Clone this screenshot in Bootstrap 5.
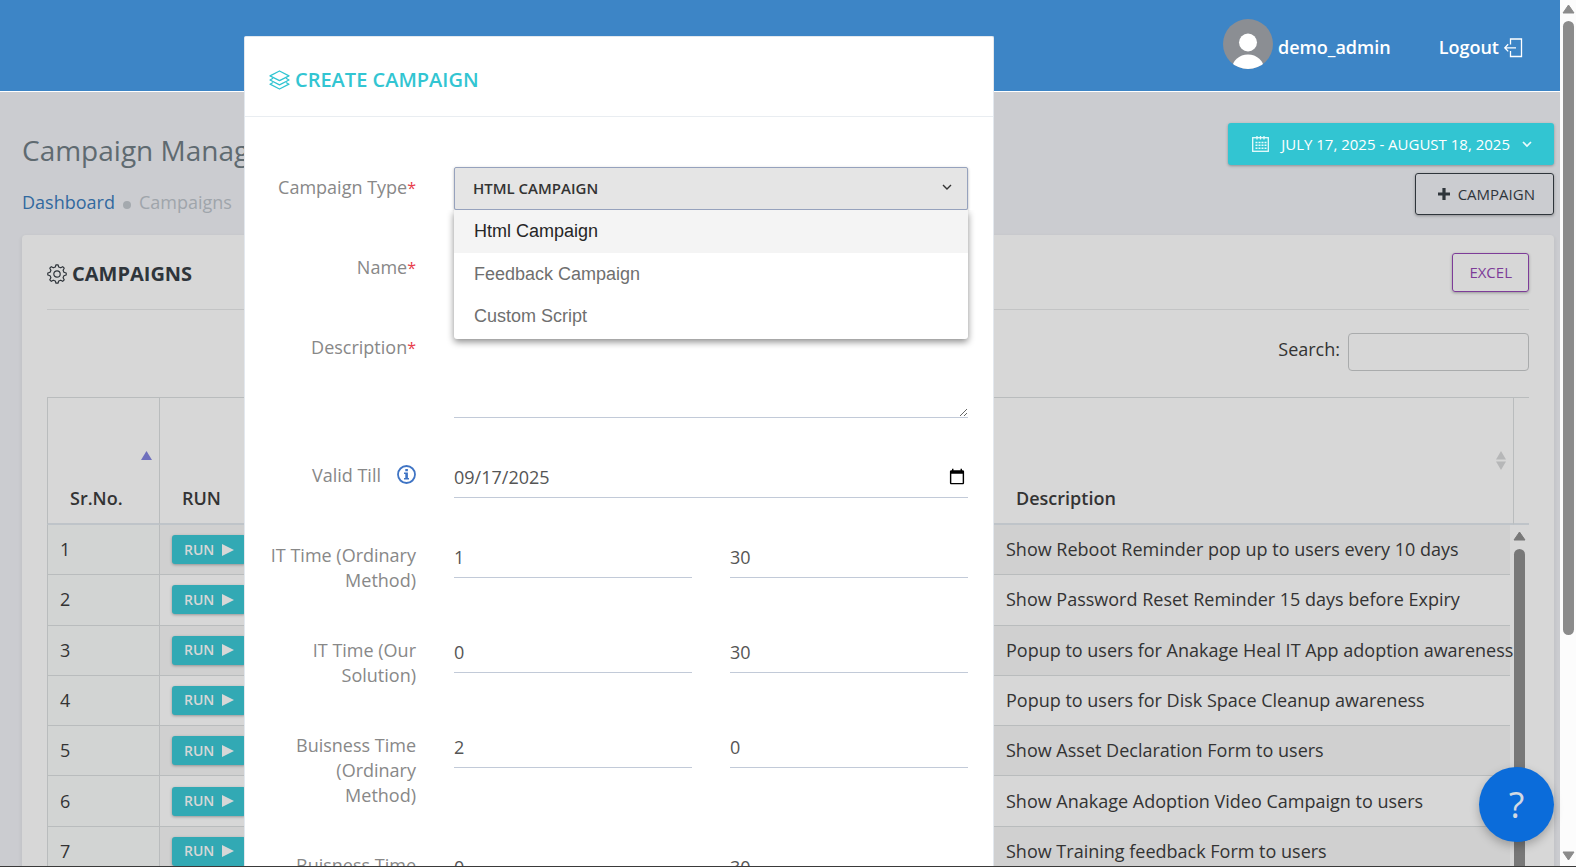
<!DOCTYPE html>
<html lang="en">
<head>
<meta charset="utf-8">
<meta name="viewport" content="width=device-width, initial-scale=1">
<title>Campaign Management</title>
<link href="https://cdn.jsdelivr.net/npm/bootstrap@5.3.0/dist/css/bootstrap.min.css" rel="stylesheet">
<style>
  body { font-family: "Open Sans", sans-serif; font-size: 18px; line-height: 25px; color: #333; background: #cbccd0; }
  svg { display: block; flex: none; }
  .shell { border-bottom: 1px solid #3a3a3a; }
  .topbar { height: 92px; background: #3d85c6; border-bottom: 1px solid #fff; padding: 4px 37px 0 22px; }
  .topbar a { color: #fff; font-weight: 600; gap: 5px; }
  .content { padding: 31px 6px 0 22px; }
  .page-title { font-size: 28px; line-height: 36px; color: #5f6a70; margin: 9px 0 22px; font-weight: 400; }
  .crumbs { color: #9fa5ab; }
  .crumbs a { color: #32699f; }
  .dot { width: 8px; height: 8px; border-radius: 50%; background: #a4a9ae; }
  .btn { --bs-btn-font-size: 15px; --bs-btn-border-radius: 3px; --bs-btn-line-height: 22px; text-transform: uppercase; font-weight: 600; box-shadow: 0 1px 3px rgba(0,0,0,.3); }
  .btn-range { --bs-btn-bg: #32c5d2; --bs-btn-color: #fff; height: 42px; padding: 0 22px 0 24px; border: 0; }
  .btn-add { --bs-btn-color: #2f353b; --bs-btn-border-color: #2f353b; height: 42px; padding: 0 18px 0 22px; }
  .btn-excel { --bs-btn-color: #7d3c98; --bs-btn-border-color: #7d3c98; height: 39px; padding: 0 16px; }
  .btn-range, .btn-add, .btn-excel { font-weight: 500; }
  .panel { background: #d7d7d7; border-radius: 4px 4px 0 0; padding: 0 25px; box-shadow: 0 2px 3px 2px rgba(0,0,0,.04); margin-top: 20px; }
  .panel-head { height: 75px; border-bottom: 1px solid #c3c4c5; }
  .panel-head h2 { font-size: 20px; font-weight: 700; color: #2f353b; gap: 5px; padding-top: 4px; }
  .search-row { height: 87px; padding-top: 23px; }
  .search-row input { width: 181px; height: 38px; background: transparent; border: 1px solid #a9abac; border-radius: 4px; }
  .grid-table { table-layout: fixed; margin: 0; border-collapse: separate; border-spacing: 0; width: 100%; color: #333; }
  .body-table { height: 352px; }
  .grid-table th, .grid-table td { border-right: 1px solid #b9bcbd; white-space: nowrap; vertical-align: middle; }
  .grid-table th:first-child, .grid-table td:first-child { border-left: 1px solid #b9bcbd; }
  .grid-table th { height: 128px; border-top: 1px solid #b9bcbd; border-bottom: 2px solid #bfc4c9; font-weight: 600; padding: 75px 8px 0 22px; }
  .grid-table th:last-child, .grid-table td:last-child { border-right: 0; }
  .grid-table td { height: 50px; border-bottom: 1px solid #b9bcbd; padding: 0 12px; }
  .grid-table tbody tr:nth-child(odd) { background: #d0d0d0; }
  .grid-table tbody td:first-child { background: #d2d4d3; }
  .c-num { width: 113px; } .c-run { width: 112px; } .c-desc { width: 520px; } .c-desc-body { width: 516px; } .c-bar { width: 15px; }
  .sort { right: 7px; top: 53px; }
  .btn-run { --bs-btn-bg: #32a9b4; --bs-btn-color: #d7d7d7; --bs-btn-font-size: 14px; height: 29px; padding: 0 12px; border: 0; }
  .inner-bar { width: 19px; padding: 6px 4px 0 4px; }
  .inner-bar .thumb { width: 11px; background: #787878; border-radius: 6px 6px 0 0; }
  .page-bar { width: 16px; background: #fcfcfc; padding: 4px 0 5px; }
  .page-bar .track { padding-top: 7px; }
  .page-bar .thumb { width: 11px; height: 74%; background: #8b8b8b; border-radius: 6px; }
  .overlay { inset: 36px 16px 0 0; padding-left: 244px; overflow: hidden; z-index: 5; pointer-events: none; }
  .sheet { max-width: 750px; height: 100%; overflow: hidden; background: #fff; border: 1px solid #e3e8ee; border-bottom: 0; border-radius: 2px 2px 0 0; pointer-events: auto; }
  .sheet-head { height: 80px; padding: 7px 24px 0; border-bottom: 1px solid #e9edf1; color: #32c5d2; gap: 5px; }
  .sheet-head h1 { font-size: 20px; line-height: 26px; font-weight: 600; text-transform: uppercase; }
  .sheet-body { padding: 50px 6px 0; }
  .row { --bs-gutter-x: 38px; }
  .sheet-body > form { padding: 0 19px; }
  .field { margin-bottom: 37px; }
  .field-label { padding-top: 8px; color: #888; text-align: right; }
  .star { color: #e73d4a; font-size: 16px; }
  .info { margin-top: 2px; }
  .line { display: block; width: 100%; height: 43px; border: 0; border-bottom: 1px solid #c2cad8; background: transparent; color: #555; padding: 2px 0 0; outline: 0; }
  textarea.line { height: 91px; resize: vertical; }
  .btn-type { --bs-btn-bg: #e5e5e5; --bs-btn-color: #333; --bs-btn-border-color: #96a2bd; --bs-btn-border-radius: 2px; height: 43px; padding: 0 15px 2px 18px; width: 100%; }
  .type-menu { top: 43px; left: 0; width: 100%; margin: 0; padding: 0 0 2px; border: 0; border-radius: 0 0 3px 3px; box-shadow: 0 3px 7px rgba(0,0,0,.45); font: 18px/24px "Liberation Sans", sans-serif; clip-path: inset(0 -12px -12px -12px); }
  .type-menu a { padding: 9px 20px; color: #6f6f6f; }
  .type-menu a.chosen { background: #f4f4f4; color: #262626; padding-bottom: 10px; }
  .help { right: 22px; bottom: 24px; width: 75px; height: 75px; background: #0b6cda; color: #d3d9e2; border: 0; z-index: 6; font-size: 36px; box-shadow: 0 4px 10px rgba(0,0,0,.25); }
</style>
</head>
<body>
<div class="shell vh-100 d-flex overflow-hidden position-relative">
  <div class="flex-grow-1 overflow-hidden">
    <header class="topbar d-flex justify-content-end align-items-center gap-5">
      <a href="#" class="d-flex align-items-center text-decoration-none">
        <svg width="50" height="50" viewBox="0 0 50 50" class="mb-2"><defs><clipPath id="av"><circle cx="25" cy="25" r="25"/></clipPath></defs><g clip-path="url(#av)"><rect width="50" height="50" fill="#8b8e93"/><circle cx="25" cy="23.500" r="9" fill="#fff"/><ellipse cx="25" cy="50" rx="16" ry="14.500" fill="#fff"/></g></svg>
        demo_admin</a>
      <a href="#" class="d-flex align-items-center text-decoration-none">Logout
        <svg width="19" height="20" viewBox="0 0 19 20" fill="none" stroke="#fff" stroke-width="1.3"><path d="M6.500 6.500V1h11v17.500h-11v-5.500M12 9.800H1M4.200 6.200L.8 9.800l3.400 3.600"/></svg></a>
    </header>
    <main class="content">
      <div class="d-flex justify-content-between">
        <div>
          <p class="page-title">Campaign Management</p>
          <nav class="crumbs d-flex align-items-center"><a href="#" class="text-decoration-none">Dashboard</a><span class="dot ms-2 me-2 mt-1"></span>Campaigns</nav>
        </div>
        <div class="d-flex flex-column align-items-end gap-2">
          <button class="btn btn-range d-flex align-items-center"><svg class="me-2" width="17" height="16" viewBox="0 0 17 16" fill="none" stroke="#e9fbfc"><rect x=".7" y="1.700" width="15.600" height="13.600" stroke-width="1.300"/><path d="M5 0v3.500M8.500 0v3.500M12 0v3.500" stroke-width="1.300"/><path d="M3.500 6.500h11M3.500 9.300h11M3.500 12.200h11" stroke-width="1.500" stroke-dasharray="2 1"/></svg><span class="ms-1 me-2">July 17, 2025 - August 18, 2025</span><svg class="ms-1" width="10" height="7" viewBox="0 0 10 7" fill="none" stroke="#e9fbfc" stroke-width="1.700"><path d="M1 1l4 4 4-4"/></svg></button>
          <button class="btn btn-add d-flex align-items-center gap-2"><svg width="12" height="12" viewBox="0 0 12 12" stroke="#2f353b" stroke-width="3.200"><path d="M6 0v12M0 6h12"/></svg>Campaign</button>
        </div>
      </div>
      <section class="panel">
        <div class="panel-head d-flex align-items-center justify-content-between">
          <h2 class="d-flex align-items-center m-0"><svg width="20" height="20" viewBox="0 0 20 20" fill="none" stroke="#2f353b" stroke-width="1.200" stroke-linejoin="round"><circle cx="10" cy="10" r="3.200"/><path d="M8.300 3L9 .8h2l.7 2.200 2 .8 2-1.100 1.500 1.500-1.100 2 .8 2 2.300.8v2l-2.300.8-.8 2 1.100 2-1.500 1.500-2-1.100-2 .8-.7 2.200H9l-.7-2.200-2-.8-2 1.100-1.500-1.500 1.100-2-.8-2L.8 11V9l2.300-.8.8-2-1.100-2 1.500-1.500 2 1.100z"/></svg>CAMPAIGNS</h2>
          <button class="btn btn-excel">Excel</button>
        </div>
        <div class="search-row d-flex justify-content-end gap-2"><label for="q" class="pt-1">Search:</label><input id="q" type="search"></div>
        <table class="grid-table">
          <colgroup><col class="c-num"><col class="c-run"><col><col class="c-desc"><col class="c-bar"></colgroup>
          <thead><tr>
            <th class="position-relative">Sr.No.<svg class="sort position-absolute" width="11" height="9" viewBox="0 0 11 9"><path d="M5.500 0L11 9H0z" fill="#6f70bd"/></svg></th>
            <th>RUN</th><th></th>
            <th class="position-relative">Description<svg class="sort position-absolute" width="10" height="19" viewBox="0 0 10 19"><path d="M5 0l5 8.500H0zM5 19l5-8.500H0z" fill="#b6b7b8"/></svg></th><th class="p-0"></th>
          </tr></thead>
        </table>
        <div class="d-flex">
          <table class="grid-table body-table">
            <colgroup><col class="c-num"><col class="c-run"><col><col class="c-desc-body"></colgroup>
            <tbody id="rows"></tbody>
          </table>
          <div class="inner-bar d-flex flex-column align-items-center gap-2 flex-shrink-0"><svg width="13" height="10" viewBox="0 0 13 10"><path d="M6.500 1L12 9H1z" fill="#787878" stroke="#787878" stroke-linejoin="round"/></svg><div class="thumb flex-grow-1"></div></div>
        </div>
      </section>
    </main>
  </div>

  <div class="page-bar d-flex flex-column align-items-center flex-shrink-0">
    <svg width="13" height="10" viewBox="0 0 13 10"><path d="M6.500 1L12 9H1z" fill="#8b8b8b" stroke="#8b8b8b" stroke-linejoin="round"/></svg>
    <div class="flex-grow-1 track"><div class="thumb"></div></div>
    <svg width="13" height="10" viewBox="0 0 13 10"><path d="M6.500 9L12 1H1z" fill="#8b8b8b" stroke="#8b8b8b" stroke-linejoin="round"/></svg>
  </div>

  <div class="overlay position-absolute">
    <div class="sheet" role="dialog" aria-labelledby="dlg">
      <div class="sheet-head d-flex align-items-center">
        <svg width="21" height="20" viewBox="0 0 21 20" fill="none" stroke="#32c5d2" stroke-width="1.300" stroke-linejoin="round"><path d="M10.500 1L20 5.800l-9.500 4.800L1 5.800z"/><path d="M4 8.300L1 10l9.500 4.800L20 10l-3-1.700M4 12.500l-3 1.700 9.500 4.800 9.500-4.800-3-1.700"/></svg>
        <h1 class="m-0" id="dlg">Create Campaign</h1>
      </div>
      <div class="sheet-body"><form>
        <div class="row field">
          <label class="col-3 field-label" for="type">Campaign Type<span class="star">*</span></label>
          <div class="col-9"><div class="position-relative">
            <button type="button" id="type" class="btn btn-type d-flex align-items-center justify-content-between" aria-haspopup="listbox" aria-expanded="true">Html Campaign<svg width="10" height="7" viewBox="0 0 10 7" fill="none" stroke="#333" stroke-width="1.400"><path d="M1 1l4 4 4-4"/></svg></button>
            <ul class="dropdown-menu type-menu show">
              <li><a class="dropdown-item chosen" href="#">Html Campaign</a></li>
              <li><a class="dropdown-item" href="#">Feedback Campaign</a></li>
              <li><a class="dropdown-item" href="#">Custom Script</a></li>
            </ul></div>
          </div>
        </div>
        <div class="row field">
          <label class="col-3 field-label" for="name">Name<span class="star">*</span></label>
          <div class="col-9"><input class="line" id="name" type="text"></div>
        </div>
        <div class="row field">
          <label class="col-3 field-label" for="desc">Description<span class="star">*</span></label>
          <div class="col-9"><textarea class="line" id="desc"></textarea></div>
        </div>
        <div class="row field">
          <label class="col-3 field-label d-flex justify-content-end gap-3" for="till">Valid Till<svg width="19" height="19" viewBox="0 0 19 19" class="info"><circle cx="9.500" cy="9.500" r="8.500" fill="none" stroke="#3f74c4" stroke-width="1.800"/><path d="M8.300 4h2.600v2.300H8.300zM7 7.600h3.900v5.400H12v1.500H7V13h1.300V9.100H7z" fill="#3f74c4"/></svg></label>
          <div class="col-9"><input class="line" id="till" type="date" value="2025-09-17"></div>
        </div>
        <div class="row field">
          <label class="col-3 field-label" for="a1">IT Time (Ordinary Method)</label>
          <div class="col-9"><div class="row"><div class="col-6"><input class="line" id="a1" type="number" value="1"></div><div class="col-6"><input class="line" aria-label="Minutes" type="number" value="30"></div></div></div>
        </div>
        <div class="row field">
          <label class="col-3 field-label" for="a2">IT Time (Our Solution)</label>
          <div class="col-9"><div class="row"><div class="col-6"><input class="line" id="a2" type="number" value="0"></div><div class="col-6"><input class="line" aria-label="Minutes" type="number" value="30"></div></div></div>
        </div>
        <div class="row field">
          <label class="col-3 field-label" for="a3">Buisness Time (Ordinary Method)</label>
          <div class="col-9"><div class="row"><div class="col-6"><input class="line" id="a3" type="number" value="2"></div><div class="col-6"><input class="line" aria-label="Minutes" type="number" value="0"></div></div></div>
        </div>
        <div class="row field">
          <label class="col-3 field-label" for="a4">Buisness Time</label>
          <div class="col-9"><div class="row"><div class="col-6"><input class="line" id="a4" type="number" value="0"></div><div class="col-6"><input class="line" aria-label="Minutes" type="number" value="30"></div></div></div>
        </div>
      </form></div>
    </div>
  </div>
  <button class="help position-absolute rounded-circle" aria-label="Help">?</button>
</div>
<script src="https://cdn.jsdelivr.net/npm/bootstrap@5.3.0/dist/js/bootstrap.bundle.min.js"></script>
<script>
  const items = ["Show Reboot Reminder pop up to users every 10 days", "Show Password Reset Reminder 15 days before Expiry", "Popup to users for Anakage Heal IT App adoption awareness", "Popup to users for Disk Space Cleanup awareness", "Show Asset Declaration Form to users", "Show Anakage Adoption Video Campaign to users", "Show Training feedback Form to users"];
  document.getElementById("rows").innerHTML = items.map((t, i) => `<tr><td>${i + 1}</td><td><button class="btn btn-run d-flex align-items-center gap-2">Run<svg width="12" height="12" viewBox="0 0 12 12"><path d="M0 0l12 6-12 6z" fill="#d7d7d7"/></svg></button></td><td></td><td>${t}</td></tr>`).join("");
</script>
</body>
</html>
